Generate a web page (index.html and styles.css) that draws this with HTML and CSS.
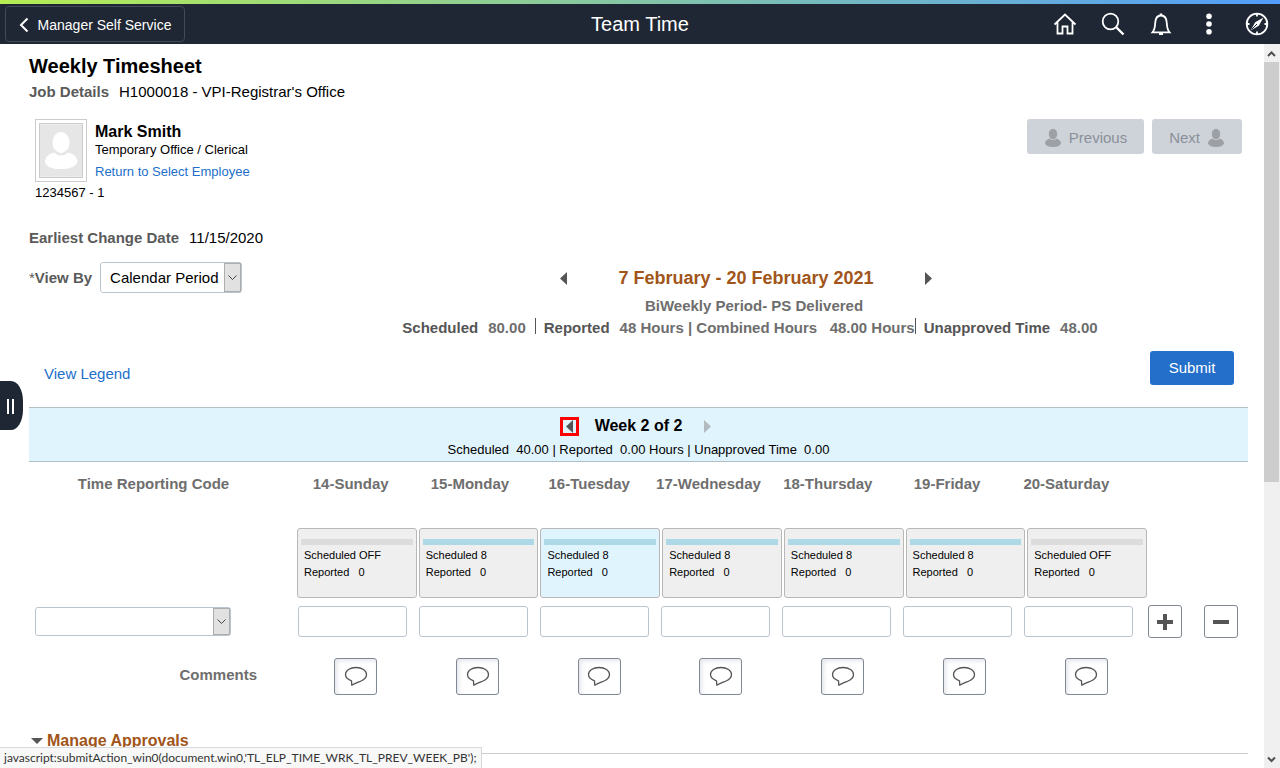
FILE: index.html
```html
<!DOCTYPE html>
<html lang="en">
<head>
<meta charset="utf-8">
<title>Team Time</title>
<link rel="stylesheet" href="styles.css">
</head>
<body>
<svg class="sprite" aria-hidden="true">
  <symbol id="bubble" viewBox="0 0 24 20"><path d="M7.500 14.800C3.600 13.400 1.500 11.400 1.500 8.600C1.500 4.500 6 1.500 12 1.500S22.500 4.500 22.500 8.600C22.500 11.300 20.600 13.600 17 15C14 16.300 11 17.400 7.800 19.200Z" fill="none" stroke="#555" stroke-width="1.300" stroke-linejoin="round"/></symbol>
  <symbol id="user" viewBox="0 0 18 20"><ellipse cx="9" cy="6" rx="4.200" ry="5.200"/><path d="M5.500 10.500Q9 13.500 12.500 10.500Q17 12 17 15.500Q15.500 19 9 19T1 15.500Q1 12 5.500 10.500Z"/></symbol>
</svg>
<header class="banner">
  <button class="back" type="button"><svg width="10" height="16" viewBox="0 0 10 16"><path d="M8.500 1.500L2 8L8.500 14.500" fill="none" stroke="#fff" stroke-width="2"/></svg>Manager Self Service</button>
  <h1 class="banner-title">Team Time</h1>
  <nav class="tools">
    <button type="button" aria-label="Home"><svg width="24" height="24" viewBox="0 0 24 24"><path d="M1.500 12.500L12 2.500L22.500 12.500M4.500 10.500V21.500H9.500V14.500H14.500V21.500H19.500V10.500"/></svg></button>
    <button type="button" aria-label="Search"><svg width="24" height="24" viewBox="0 0 24 24"><circle cx="9.500" cy="9.500" r="7.800"/><path d="M15 15L22.500 22.500" stroke-width="2.400"/></svg></button>
    <button type="button" aria-label="Notifications"><svg width="24" height="24" viewBox="0 0 24 24"><path d="M3.500 20.300C5.500 18 6 16 6.200 11C6.400 6.500 8.500 3.500 12 3.500S17.600 6.500 17.800 11C18 16 18.500 18 20.500 20.300Z"/><path d="M10.700 2.700H13.300M10 22H14" stroke-width="2.200"/></svg></button>
    <button type="button" aria-label="Actions"><svg width="24" height="24" viewBox="0 0 24 24"><g fill="#fff" stroke="none"><circle cx="12" cy="4.200" r="2.800"/><circle cx="12" cy="12" r="2.800"/><circle cx="12" cy="19.800" r="2.800"/></g></svg></button>
    <button type="button" aria-label="Navigator"><svg width="24" height="24" viewBox="0 0 24 24"><circle cx="12" cy="12" r="10.300"/><path d="M12 2V4.500M12 19.500V22M2 12H4.500M19.500 12H22"/><path d="M18.500 5.500L13.800 13.800L5.500 18.500L10.200 10.200Z" fill="#fff" stroke="none"/><path d="M6.500 17.500L12 12" stroke="#1e2733" stroke-width="1"/></svg></button>
  </nav>
</header>
<div class="frame">
<main class="page">
  <h2 class="title">Weekly Timesheet</h2>
  <p class="job"><b class="label">Job Details</b><span>H1000018 - VPI-Registrar's Office</span></p>
  <section class="person">
    <div class="photo"><svg width="44" height="55" viewBox="0 0 44 55"><path fill="#e6e6e6" d="M0 0H44V55H0Z"/><g fill="#fff"><ellipse cx="22" cy="19" rx="9" ry="11"/><path d="M14.500 29.500Q22 36 29.500 29.500Q39 32 39.500 39Q37 47 22 47T5 39Q5.500 32 14.500 29.500Z"/></g></svg></div>
    <div class="who">
      <h3 class="name">Mark Smith</h3>
      <p class="role">Temporary Office / Clerical</p>
      <a class="return" href="#">Return to Select Employee</a>
    </div>
    <div class="pager">
      <button type="button" disabled><svg width="18" height="20"><use href="#user"/></svg>Previous</button>
      <button type="button" disabled>Next<svg width="18" height="20"><use href="#user"/></svg></button>
    </div>
  </section>
  <p class="emplid">1234567 - 1</p>
  <p class="changed"><b class="label">Earliest Change Date</b><span>11/15/2020</span></p>
  <section class="period">
    <div class="viewby">
      <label class="label" for="view"><span class="star">*</span>View By</label>
      <span class="drop"><select id="view"><option>Calendar Period</option></select><svg width="17" height="29" viewBox="0 0 17 29"><path d="M4.500 12.500L8.500 16.500L12.500 12.500"/></svg></span>
    </div>
    <div class="range">
      <div class="range-nav">
        <button class="arrow" type="button" aria-label="Previous period"><svg width="7" height="13"><path d="M7 0V13L0 6.500Z"/></svg></button>
        <h3>7 February - 20 February 2021</h3>
        <button class="arrow" type="button" aria-label="Next period"><svg width="7" height="13"><path d="M0 0V13L7 6.500Z"/></svg></button>
      </div>
      <p class="kind">BiWeekly Period- PS Delivered</p>
      <p class="totals"><span class="part"><b>Scheduled</b><span>80.00</span></span><span class="part reported"><b>Reported</b><span>48 Hours | Combined Hours &nbsp; 48.00 Hours</span></span><span class="part"><b>Unapproved Time</b><span>48.00</span></span></p>
    </div>
  </section>
  <div class="actions"><a href="#">View Legend</a><button class="submit" type="button">Submit</button></div>
  <section class="week">
    <div class="week-nav">
      <button class="arrow marked" type="button" aria-label="Previous week"><svg width="7" height="13"><path d="M7 0V13L0 6.500Z"/></svg></button>
      <h3>Week 2 of 2</h3>
      <button class="arrow faded" type="button" aria-label="Next week"><svg width="7" height="13"><path d="M0 0V13L7 6.500Z"/></svg></button>
    </div>
    <p>Scheduled &nbsp;40.00 | Reported &nbsp;0.00 Hours | Unapproved Time &nbsp;0.00</p>
  </section>
  <table class="sheet">
    <thead>
      <tr class="days"><th scope="col">Time Reporting Code</th><th scope="col">14-Sunday</th><th scope="col">15-Monday</th><th scope="col">16-Tuesday</th><th scope="col">17-Wednesday</th><th scope="col">18-Thursday</th><th scope="col">19-Friday</th><th scope="col">20-Saturday</th></tr>
    </thead>
    <tbody>
      <tr class="cards"><td></td>
        <td><div class="card off">Scheduled OFF<br>Reported &nbsp; 0</div></td>
        <td><div class="card">Scheduled 8<br>Reported &nbsp; 0</div></td>
        <td><div class="card active">Scheduled 8<br>Reported &nbsp; 0</div></td>
        <td><div class="card">Scheduled 8<br>Reported &nbsp; 0</div></td>
        <td><div class="card">Scheduled 8<br>Reported &nbsp; 0</div></td>
        <td><div class="card">Scheduled 8<br>Reported &nbsp; 0</div></td>
        <td><div class="card off">Scheduled OFF<br>Reported &nbsp; 0</div></td>
      </tr>
      <tr class="entry">
        <td><span class="drop wide"><select aria-label="Time Reporting Code"><option></option></select><svg width="17" height="27" viewBox="0 0 17 27"><path d="M4.500 11.500L8.500 15.500L12.500 11.500"/></svg></span></td>
        <td><input type="text" aria-label="14-Sunday"></td><td><input type="text" aria-label="15-Monday"></td><td><input type="text" aria-label="16-Tuesday"></td><td><input type="text" aria-label="17-Wednesday"></td><td><input type="text" aria-label="18-Thursday"></td><td><input type="text" aria-label="19-Friday"></td><td><input type="text" aria-label="20-Saturday"></td>
        <td class="rowtools">
          <button type="button" aria-label="Add row"><svg width="16" height="16"><path d="M8 0V16M0 8H16"/></svg></button>
          <button type="button" aria-label="Delete row"><svg width="16" height="16"><path d="M0 8H16"/></svg></button>
        </td>
      </tr>
      <tr class="comments"><th scope="row">Comments</th>
        <td><button type="button" aria-label="Comment, 14-Sunday"><svg width="24" height="20"><use href="#bubble"/></svg></button></td>
        <td><button type="button" aria-label="Comment, 15-Monday"><svg width="24" height="20"><use href="#bubble"/></svg></button></td>
        <td><button type="button" aria-label="Comment, 16-Tuesday"><svg width="24" height="20"><use href="#bubble"/></svg></button></td>
        <td><button type="button" aria-label="Comment, 17-Wednesday"><svg width="24" height="20"><use href="#bubble"/></svg></button></td>
        <td><button type="button" aria-label="Comment, 18-Thursday"><svg width="24" height="20"><use href="#bubble"/></svg></button></td>
        <td><button type="button" aria-label="Comment, 19-Friday"><svg width="24" height="20"><use href="#bubble"/></svg></button></td>
        <td><button type="button" aria-label="Comment, 20-Saturday"><svg width="24" height="20"><use href="#bubble"/></svg></button></td>
      </tr>
    </tbody>
  </table>
  <h3 class="approvals"><svg width="12" height="6"><path d="M0 0H12L6 6Z" fill="#555"/></svg>Manage Approvals</h3>
</main>
<div class="scroll" aria-hidden="true">
  <svg width="16" height="18" viewBox="0 0 16 18"><path d="M4 12L7.500 8.500L11 12"/></svg>
  <div class="track"><div class="thumb"></div></div>
  <svg width="16" height="17" viewBox="0 0 16 17"><path d="M4 6.500L7.500 10L11 6.500"/></svg>
</div>
</div>
<button class="handle" type="button" aria-label="Open side panel"><span></span><span></span></button>
<div class="status">javascript:submitAction_win0(document.win0,'TL_ELP_TIME_WRK_TL_PREV_WEEK_PB');</div>
</body>
</html>
```
FILE: styles.css
```css
* { box-sizing: border-box; }
body { margin: 0; height: 100vh; display: flex; flex-direction: column; overflow: hidden; background: #fff; color: #000; font: 15px/20px "Liberation Sans", Arial, sans-serif; }
h1, h2, h3, p { margin: 0; font-weight: normal; }
button, input, select { font: inherit; }
button { padding: 0; border: 0; background: none; display: flex; align-items: center; justify-content: center; }
svg { display: block; flex: none; }
a { color: #226fca; text-decoration: none; }
.sprite { position: absolute; width: 0; height: 0; }
.label { color: #5a5a5a; font-weight: bold; }

.banner { height: 44px; flex: none; background: #1e2733; color: #fff; display: grid; grid-template-columns: 1fr auto 1fr; align-items: center; border-top: 4px solid; border-image: linear-gradient(90deg, #b5ed52, #529dfb) 1; }
.back { justify-self: start; height: 36px; width: 180px; margin-left: 5px; padding-top: 2px; gap: 9px; color: #fff; font-size: 14px; border: 1px solid #414a56; border-radius: 4px; }
.banner-title { font-size: 20px; line-height: 24px; }
.tools { justify-self: end; display: flex; gap: 24px; padding-right: 11px; }
.tools svg { fill: none; stroke: #fff; stroke-width: 1.800; }

.frame { flex: 1; min-height: 0; display: flex; }
.page { flex: 1; min-width: 0; overflow: hidden; padding: 10px 16px 0 29px; }
.title { font-size: 20px; line-height: 24px; font-weight: bold; }
.job, .changed { display: flex; gap: 10px; }
.job { margin-top: 4px; }
.person { display: flex; align-items: flex-start; gap: 8px; margin: 17px 6px 0; }
.photo { border: 1px solid #ccc; padding: 3px; }
.photo svg { border: 1px solid #ccc; }
.name { font-size: 16px; font-weight: bold; line-height: 20px; padding-top: 3px; }
.role { font-size: 13px; line-height: 16px; }
.return { display: block; font-size: 13px; line-height: 16px; margin-top: 6px; }
.pager { margin-left: auto; display: flex; gap: 8px; }
.pager button { height: 35px; gap: 7px; padding: 2px 17px 0; background: #ced3da; color: #8a9099; border-radius: 3px; }
.pager svg { fill: #9da0a4; }
.emplid { font-size: 13px; line-height: 16px; margin: 3px 6px 0; }
.changed { margin-top: 27px; }

.period { display: grid; grid-template-columns: 372px 1fr 149px; margin-top: 14px; }
.viewby { display: flex; align-items: center; gap: 8px; align-self: start; }
.star { font-weight: normal; }
.drop { display: flex; width: 142px; height: 31px; border: 1px solid #bac4d0; border-radius: 3px; }
.drop select { appearance: none; flex: 1; min-width: 0; border: 0; border-radius: 3px; background: #fff; padding: 0 0 0 9px; color: #000; }
.drop svg { fill: none; stroke: #444; background: #e1e1e1; outline: 1px solid #adadad; outline-offset: -1px; }
.drop.wide { width: 196px; height: 29px; margin: 0 6px; }
.range { text-align: center; white-space: nowrap; display: flex; flex-direction: column; align-items: center; }
.range-nav { height: 32px; display: flex; align-items: center; gap: 51px; padding-right: 8px; }
.range-nav h3 { font-size: 18px; font-weight: bold; color: #a1551a; }
.arrow svg { fill: #555; }
.kind, .totals { font-weight: bold; color: #6e6e6e; margin-top: 2px; }
.kind { padding-left: 8px; }
.totals { display: flex; height: 20px; }
.totals .part { display: flex; gap: 10px; height: 16px; }
.totals .part + .part { border-left: 1px solid #555; padding-left: 8px; }
.totals .reported { margin-left: 9px; }
.totals b { color: #555; }

.actions { display: flex; justify-content: space-between; padding: 0 14px 0 15px; margin-top: 13px; }
.actions a { padding-top: 13px; }
.submit { width: 84px; height: 34px; color: #fff; background: #246fc9; border-radius: 3px; }
.week { margin-top: 22px; height: 55px; background: #e0f4fd; border-top: 1px solid #b5bec2; border-bottom: 1px solid #b0bec6; text-align: center; font-size: 13px; padding-top: 8px; line-height: 16px; }
.week p { margin-top: 6px; }
.week-nav { display: flex; justify-content: center; align-items: center; gap: 16px; height: 20px; }
.week h3 { font-size: 16px; font-weight: bold; }
.week .arrow { width: 19px; height: 19px; }
.marked { border: 3px solid #f00; }
.faded svg { fill: #b3babf; }

.sheet { display: block; color: #6e6e6e; }
.sheet thead, .sheet tbody { display: block; }
.sheet tr { display: grid; align-items: center; }
.sheet th, .sheet td { padding: 0; }
.sheet .days { grid-template-columns: 249px 13px repeat(7, 1fr) 122px; padding: 12px 0 34px; }
.days th:nth-child(2) { grid-column: 3; }
.sheet .cards { grid-template-columns: 268px repeat(7, 1fr) 99px; }
.card { height: 70px; margin-right: 2px; padding: 0 6px; border: 1px solid #b8b8b8; border-radius: 3px; background: #efefef; color: #000; font-size: 11px; line-height: 17px; }
.card::before { content: ""; display: block; height: 6px; margin: 10px -3px 2px; background: #add8e6; }
.card.off::before { background: #dcdcdc; }
.card.active { background: #e0f4fd; }
.sheet .entry { grid-template-columns: 269px repeat(7, 1fr) 103px; margin-top: 7px; }
.entry input { display: block; width: calc(100% - 12px); height: 31px; border: 1px solid #bac4d0; border-radius: 3px; }
.sheet .rowtools { display: flex; gap: 22px; padding-left: 3px; }
.rowtools button { width: 34px; height: 33px; border: 1px solid #7f8893; border-radius: 3px; }
.rowtools svg { stroke: #555; stroke-width: 4; }
.sheet .comments { grid-template-columns: 266px repeat(7, 1fr) 101px; margin-top: 20px; }
.sheet .comments th { text-align: right; padding: 0 38px 4px 0; }
.comments td { display: flex; justify-content: center; }
.comments button { width: 43px; height: 37px; padding-bottom: 2px; border: 1px solid #7f8893; border-radius: 3px; box-shadow: inset 2px 2px 4px #e4e6ea; }
.approvals { display: flex; align-items: center; gap: 4px; padding: 0 2px 2px; margin-top: 36px; font-size: 16px; font-weight: bold; color: #a1551a; border-bottom: 1px solid #ccc; }

.scroll { width: 16px; flex: none; display: flex; flex-direction: column; background: #f0f0f0; }
.scroll svg { fill: none; stroke: #505050; stroke-width: 2; }
.track { flex: 1; }
.thumb { height: 61%; margin-right: 1px; background: #cdcdcd; }

.handle { position: absolute; left: 0; top: 381px; width: 23px; height: 49px; gap: 3px; background: #1e2733; border-radius: 0 12px 12px 0 / 0 20px 20px 0; padding: 2px 2px 0 0; }
.handle span { width: 2px; height: 15px; background: #fff; }
.status { position: absolute; left: 0; bottom: 0; height: 21px; padding: 0 4px; border: 1px solid #d8d8d8; border-width: 1px 1px 0 0; background: #f8f8f8; color: #333; font: 12px/20px Lato, "Open Sans", sans-serif; }
```
